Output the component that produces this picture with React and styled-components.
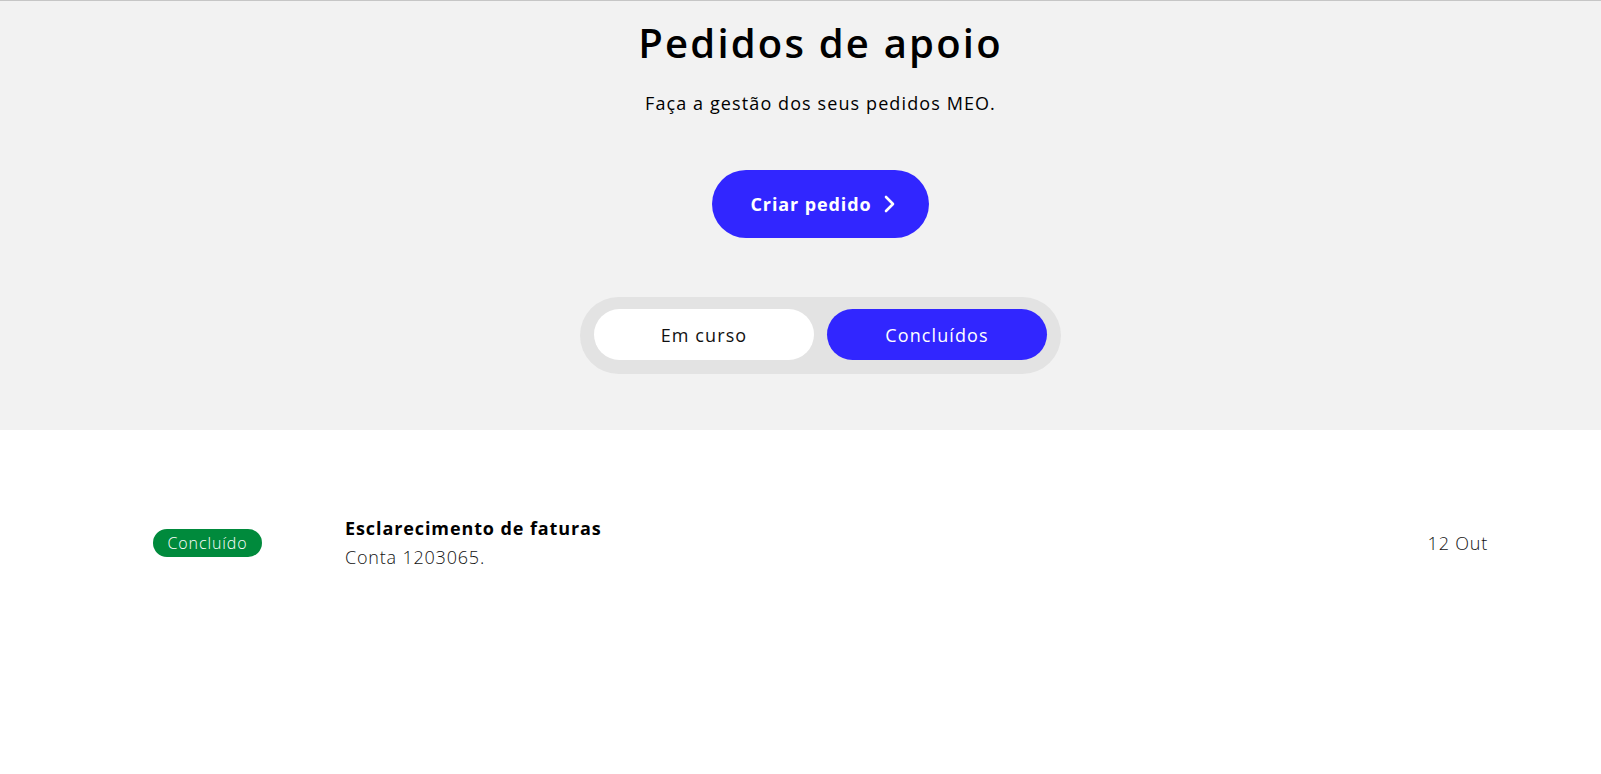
import React, { useState } from "react";
import styled, { createGlobalStyle } from "styled-components";

const Global = createGlobalStyle`
  html, body { margin: 0; padding: 0; background: #ffffff; }
  body { font-family: "Open Sans", "Liberation Sans", sans-serif; color: #000; }
  * { box-sizing: border-box; }
`;

const Page = styled.div`
  border-top: 1px solid #c6c6c6;
  min-height: 773px;
  background: #ffffff;
`;

const Hero = styled.header`
  background: #f2f2f2;
  display: flex;
  flex-direction: column;
  align-items: center;
  padding: 18px 0 56px 40px;
`;

const Title = styled.h1`
  margin: 0;
  font-size: 40px;
  line-height: 48px;
  font-weight: 600;
  letter-spacing: 2.2px;
`;

const Subtitle = styled.p`
  margin: 24px 0 0;
  font-size: 18px;
  line-height: 24px;
  font-weight: 400;
  letter-spacing: 1.1px;
`;

const PrimaryButton = styled.button`
  margin-top: 55px;
  width: 217px;
  height: 68px;
  border: none;
  border-radius: 34px;
  background: #3126ff;
  color: #fff;
  font-family: inherit;
  font-size: 18px;
  font-weight: 700;
  letter-spacing: 0.9px;
  display: flex;
  align-items: center;
  justify-content: center;
  gap: 12px;
  cursor: pointer;
  padding: 0 0 0 4px;
`;

const Tabs = styled.div`
  margin-top: 59px;
  display: flex;
  gap: 13px;
  padding: 12px 14px 14px;
  background: #e3e3e3;
  border-radius: 39px;
`;

const Tab = styled.button`
  width: 220px;
  height: 51px;
  border: none;
  border-radius: 26px;
  background: ${(p) => (p.$active ? "#3126ff" : "#ffffff")};
  color: ${(p) => (p.$active ? "#ffffff" : "#111")};
  font-family: inherit;
  font-size: 18px;
  font-weight: 400;
  letter-spacing: 1.1px;
  cursor: pointer;
`;

const List = styled.main`
  padding: 85px 113px 0 153px;
`;

const Row = styled.div`
  display: grid;
  grid-template-columns: 192px 1fr auto;
  align-items: center;
`;

const Badge = styled.span`
  justify-self: start;
  height: 28px;
  width: 109px;
  border-radius: 14px;
  background: #008a3c;
  color: #fff;
  font-size: 16px;
  font-weight: 300;
  display: inline-flex;
  align-items: center;
  justify-content: center;
  letter-spacing: 0.9px;
`;

const Info = styled.div`
  display: flex;
  flex-direction: column;
  gap: 3px;
`;

const RowTitle = styled.div`
  font-size: 18px;
  line-height: 26px;
  font-weight: 700;
  letter-spacing: 0.9px;
`;

const RowSub = styled.div`
  font-size: 18px;
  line-height: 26px;
  font-weight: 300;
  color: #111;
  letter-spacing: 0.8px;
`;

const DateText = styled.div`
  font-size: 18px;
  font-weight: 300;
  color: #111;
  letter-spacing: 0.8px;
`;

const Chevron = () => (
  <svg width="11" height="18" viewBox="0 0 11 18" fill="none">
    <path d="M2 2l7 7-7 7" stroke="#fff" strokeWidth="2.6" strokeLinecap="round" strokeLinejoin="round" />
  </svg>
);

export default function App() {
  const [tab, setTab] = useState("done");
  return (
    <Page>
      <Global />
      <Hero>
        <Title>Pedidos de apoio</Title>
        <Subtitle>Faça a gestão dos seus pedidos MEO.</Subtitle>
        <PrimaryButton>
          Criar pedido <Chevron />
        </PrimaryButton>
        <Tabs>
          <Tab $active={tab === "open"} onClick={() => setTab("open")}>Em curso</Tab>
          <Tab $active={tab === "done"} onClick={() => setTab("done")}>Concluídos</Tab>
        </Tabs>
      </Hero>
      <List>
        <Row>
          <Badge>Concluído</Badge>
          <Info>
            <RowTitle>Esclarecimento de faturas</RowTitle>
            <RowSub>Conta 1203065.</RowSub>
          </Info>
          <DateText>12 Out</DateText>
        </Row>
      </List>
    </Page>
  );
}
